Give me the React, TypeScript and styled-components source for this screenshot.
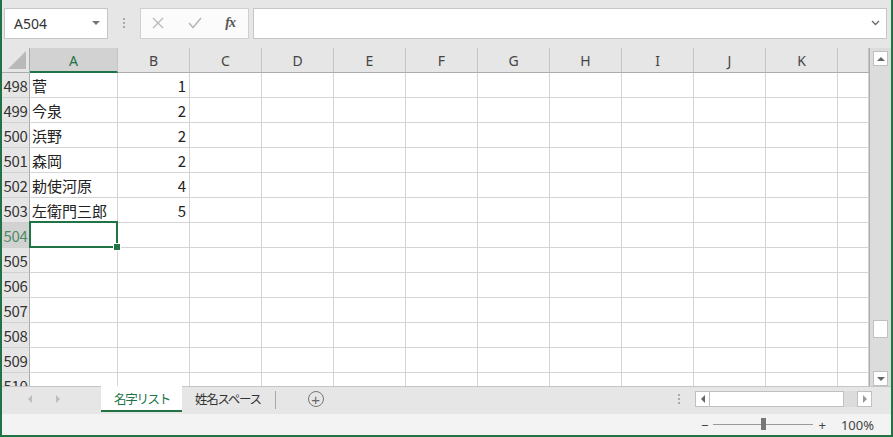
import { FunctionComponent } from 'react'
import styled, { createGlobalStyle, css } from 'styled-components'

const GREEN = '#217346'

const GlobalStyle = createGlobalStyle`
  html, body {
    margin: 0;
    padding: 0;
    background: #e6e6e6;
  }
  * {
    box-sizing: border-box;
  }
`

const Window = styled.div`
  width: 893px;
  height: 437px;
  display: flex;
  flex-direction: column;
  border-left: 2px solid ${GREEN};
  border-right: 2px solid ${GREEN};
  border-bottom: 2px solid ${GREEN};
  background: #e6e6e6;
  font-family: 'Noto Sans CJK JP', 'Noto Sans', sans-serif;
  overflow: hidden;
`

/* ---------- formula toolbar ---------- */

const Toolbar = styled.div`
  height: 48px;
  flex: none;
  display: flex;
  align-items: center;
  padding: 0 4px 2px 2px;
`

const NameBox = styled.div`
  width: 104px;
  height: 31px;
  background: #fff;
  border: 1px solid #c6c6c6;
  display: flex;
  align-items: center;
  justify-content: space-between;
  padding: 0 7px 0 9px;
  font-family: 'Noto Sans', sans-serif;
  font-size: 14px;
  color: #333;
`

const Caret = styled.span`
  width: 0;
  height: 0;
  border-left: 4px solid transparent;
  border-right: 4px solid transparent;
  border-top: 4px solid #777;
`

const Grip = styled.div`
  width: 32px;
  display: flex;
  flex-direction: column;
  align-items: center;
  gap: 2px;
  span {
    width: 2px;
    height: 2px;
    background: #aaa;
  }
`

const FxButtons = styled.div`
  width: 109px;
  height: 31px;
  background: #fbfbfb;
  border: 1px solid #d0d0d0;
  display: flex;
  align-items: center;
  justify-content: space-between;
  padding: 0 13px 0 11px;
  color: #b4b4b4;
`

const FxLabel = styled.span`
  font-family: 'Liberation Serif', serif;
  font-style: italic;
  font-size: 14px;
  color: #555;
  font-weight: bold;
  letter-spacing: -1px;
`

const FormulaBar = styled.div`
  flex: 1;
  margin-left: 4px;
  height: 31px;
  background: #fff;
  border: 1px solid #c6c6c6;
  display: flex;
  align-items: center;
  justify-content: flex-end;
  padding-right: 6px;
  color: #777;
`

/* ---------- sheet ---------- */

const SheetArea = styled.div`
  height: 338px;
  flex: none;
  display: flex;
`

const Sheet = styled.div`
  width: 868px;
  height: 338px;
  overflow: hidden;
  display: grid;
  grid-template-columns: 28px 88px repeat(10, 72px) 1fr;
  grid-auto-rows: 25px;
  align-content: start;
  background: #fff;
  border-right: 1px solid #ababab;
`

const Corner = styled.div`
  background: #e6e6e6;
  border-right: 1px solid #ababab;
  border-bottom: 1px solid #ababab;
  position: relative;
  overflow: hidden;
  &::after {
    content: '';
    position: absolute;
    right: 3px;
    bottom: 3px;
    width: 0;
    height: 0;
    border-left: 18px solid transparent;
    border-bottom: 18px solid #b9b9b9;
  }
`

const ColHeader = styled.div<{ $active?: boolean }>`
  background: ${(p) => (p.$active ? '#d2d2d2' : '#e6e6e6')};
  color: ${(p) => (p.$active ? GREEN : '#444')};
  border-right: 1px solid #c4c4c4;
  border-bottom: ${(p) => (p.$active ? `2px solid ${GREEN}` : '1px solid #ababab')};
  display: flex;
  align-items: center;
  justify-content: center;
  font-family: 'Noto Sans', sans-serif;
  font-size: 14px;
  padding-top: ${(p) => (p.$active ? '1px' : '0')};
`

const RowHeader = styled.div<{ $active?: boolean }>`
  background: ${(p) => (p.$active ? '#d2d2d2' : '#e6e6e6')};
  color: ${(p) => (p.$active ? '#4f8a63' : '#333')};
  border-right: 1px solid #ababab;
  border-bottom: 1px solid #d0d0d0;
  display: flex;
  align-items: center;
  justify-content: center;
  font-size: 15px;
  letter-spacing: -0.3px;
`

const Cell = styled.div<{ $num?: boolean; $selected?: boolean }>`
  border-right: 1px solid #d4d4d4;
  border-bottom: 1px solid #d4d4d4;
  display: flex;
  align-items: center;
  justify-content: ${(p) => (p.$num ? 'flex-end' : 'flex-start')};
  padding: 0 3px 0 2px;
  font-size: 15px;
  color: #222;
  white-space: nowrap;
  ${(p) =>
    p.$selected &&
    css`
      position: relative;
      z-index: 2;
      &::before {
        content: '';
        position: absolute;
        top: -2px;
        left: -1px;
        right: -1px;
        bottom: -1px;
        border: 2px solid ${GREEN};
      }
      &::after {
        content: '';
        position: absolute;
        right: -4px;
        bottom: -4px;
        width: 6px;
        height: 6px;
        background: ${GREEN};
        border: 1px solid #fff;
      }
    `}
`

const VScroll = styled.div`
  flex: 1;
  display: flex;
  flex-direction: column;
  align-items: center;
  background: #dcdcdc;
  padding: 3px 0 0;
`

const ScrollBox = styled.div<{ $h?: number }>`
  width: 15px;
  height: ${(p) => p.$h ?? 15}px;
  flex: none;
  background: #fff;
  border: 1px solid #c0c0c0;
  display: flex;
  align-items: center;
  justify-content: center;
`

const Arrow = styled.span<{ $dir: 'up' | 'down' | 'left' | 'right'; $color?: string }>`
  width: 0;
  height: 0;
  ${(p) => {
    const c = p.$color ?? '#666'
    switch (p.$dir) {
      case 'up':
        return `border-left:4px solid transparent;border-right:4px solid transparent;border-bottom:4px solid ${c};`
      case 'down':
        return `border-left:4px solid transparent;border-right:4px solid transparent;border-top:4px solid ${c};`
      case 'left':
        return `border-top:4px solid transparent;border-bottom:4px solid transparent;border-right:4px solid ${c};`
      default:
        return `border-top:4px solid transparent;border-bottom:4px solid transparent;border-left:4px solid ${c};`
    }
  }}
`

const Spacer = styled.div<{ $h: number }>`
  height: ${(p) => p.$h}px;
  flex: none;
`

/* ---------- tabs ---------- */

const TabBar = styled.div`
  height: 28px;
  flex: none;
  display: flex;
  align-items: flex-start;
  border-top: 1px solid #c6c6c6;
  background: #e6e6e6;
`

const TabNav = styled.div`
  width: 99px;
  height: 24px;
  display: flex;
  align-items: center;
  gap: 24px;
  padding-left: 26px;
`

const Tab = styled.div<{ $active?: boolean }>`
  height: 24px;
  padding: ${(p) => (p.$active ? '0 12px 0 13px' : '0 14px 0 13px')};
  display: flex;
  align-items: center;
  font-size: 12.5px;
  letter-spacing: -1.3px;
  margin-top: -1px;
  ${(p) =>
    p.$active
      ? css`
          background: #fff;
          color: ${GREEN};
          border-bottom: 2px solid ${GREEN};
          height: 26px;
          padding-top: 1px;
        `
      : css`
          color: #333;
        `}
`

const TabDivider = styled.div`
  width: 1px;
  height: 18px;
  margin-top: 4px;
  background: #a8a8a8;
`

const AddSheet = styled.div`
  width: 16px;
  height: 16px;
  margin: 4px 0 0 32px;
  border-radius: 50%;
  border: 1px solid #777;
  color: #666;
  display: flex;
  align-items: center;
  justify-content: center;
  font-family: 'Liberation Sans', sans-serif;
  font-size: 15px;
  line-height: 1;
`

const TabFill = styled.div`
  flex: 1;
`

const HScroll = styled.div`
  display: flex;
  align-items: center;
  height: 24px;
  margin-right: 19px;
`

const HTrack = styled.div`
  width: 177px;
  height: 16px;
  background: #dcdcdc;
  display: flex;
  margin-left: 14px;
`

const HThumb = styled.div`
  width: 134px;
  height: 16px;
  background: #fff;
  border: 1px solid #c0c0c0;
  border-left: none;
`

const VGrip = styled(Grip)`
  width: 4px;
`

/* ---------- status ---------- */

const StatusBar = styled.div`
  height: 21px;
  flex: none;
  background: #f3f3f3;
  display: flex;
  align-items: center;
  justify-content: flex-end;
  padding-right: 17px;
  font-family: 'Noto Sans', sans-serif;
  font-size: 13px;
  color: #444;
`

const Zoom = styled.div`
  display: flex;
  align-items: center;
  gap: 5px;
`

const SliderLine = styled.div`
  width: 100px;
  height: 1px;
  background: #9a9a9a;
  position: relative;
  span {
    position: absolute;
    left: 48px;
    top: -6px;
    width: 5px;
    height: 12px;
    background: #777;
  }
`

const ZoomPct = styled.span`
  margin-left: 10px;
`

const cols = ['A', 'B', 'C', 'D', 'E', 'F', 'G', 'H', 'I', 'J', 'K', '']

const data: Record<number, [string, string]> = {
  498: ['菅', '1'],
  499: ['今泉', '2'],
  500: ['浜野', '2'],
  501: ['森岡', '2'],
  502: ['勅使河原', '4'],
  503: ['左衛門三郎', '5'],
}

const rows = Array.from({ length: 13 }, (_, i) => 498 + i)

const App: FunctionComponent = () => {
  return (
    <>
      <GlobalStyle />
      <Window>
        <Toolbar>
          <NameBox>
            A504
            <Caret />
          </NameBox>
          <Grip>
            <span />
            <span />
            <span />
          </Grip>
          <FxButtons>
            <svg width="12" height="12" viewBox="0 0 12 12">
              <path d="M1 1 L11 11 M11 1 L1 11" stroke="#b8b8b8" strokeWidth="1.3" fill="none" />
            </svg>
            <svg width="14" height="12" viewBox="0 0 14 12">
              <path d="M1 6 L5 10.5 L13 1" stroke="#b8b8b8" strokeWidth="1.6" fill="none" />
            </svg>
            <FxLabel>fx</FxLabel>
          </FxButtons>
          <FormulaBar>
            <svg width="9" height="6" viewBox="0 0 9 6">
              <path d="M1 1 L4.5 4.5 L8 1" stroke="#666" strokeWidth="1.3" fill="none" />
            </svg>
          </FormulaBar>
        </Toolbar>

        <SheetArea>
          <Sheet>
            <Corner />
            {cols.map((c, i) => (
              <ColHeader key={i} $active={c === 'A'}>
                {c}
              </ColHeader>
            ))}
            {rows.map((r) => {
              const d = data[r]
              return [
                <RowHeader key={`h${r}`} $active={r === 504}>
                  {r}
                </RowHeader>,
                ...cols.map((_, ci) => (
                  <Cell key={`${r}-${ci}`} $num={ci === 1} $selected={r === 504 && ci === 0}>
                    {d && ci === 0 ? d[0] : d && ci === 1 ? d[1] : ''}
                  </Cell>
                )),
              ]
            })}
          </Sheet>
          <VScroll>
            <ScrollBox>
              <Arrow $dir="up" />
            </ScrollBox>
            <Spacer $h={254} />
            <ScrollBox $h={18} />
            <Spacer $h={33} />
            <ScrollBox>
              <Arrow $dir="down" />
            </ScrollBox>
          </VScroll>
        </SheetArea>

        <TabBar>
          <TabNav>
            <Arrow $dir="left" $color="#bdbdbd" />
            <Arrow $dir="right" $color="#bdbdbd" />
          </TabNav>
          <Tab $active>名字リスト</Tab>
          <Tab>姓名スペース</Tab>
          <TabDivider />
          <AddSheet>+</AddSheet>
          <TabFill />
          <HScroll>
            <VGrip>
              <span />
              <span />
              <span />
            </VGrip>
            <HTrack>
              <ScrollBox $h={16}>
                <Arrow $dir="left" />
              </ScrollBox>
              <HThumb />
              <TabFill />
              <ScrollBox $h={16}>
                <Arrow $dir="right" $color="#999" />
              </ScrollBox>
            </HTrack>
          </HScroll>
        </TabBar>

        <StatusBar>
          <Zoom>
            <span>−</span>
            <SliderLine>
              <span />
            </SliderLine>
            <span>+</span>
            <ZoomPct>100%</ZoomPct>
          </Zoom>
        </StatusBar>
      </Window>
    </>
  )
}

export default App
